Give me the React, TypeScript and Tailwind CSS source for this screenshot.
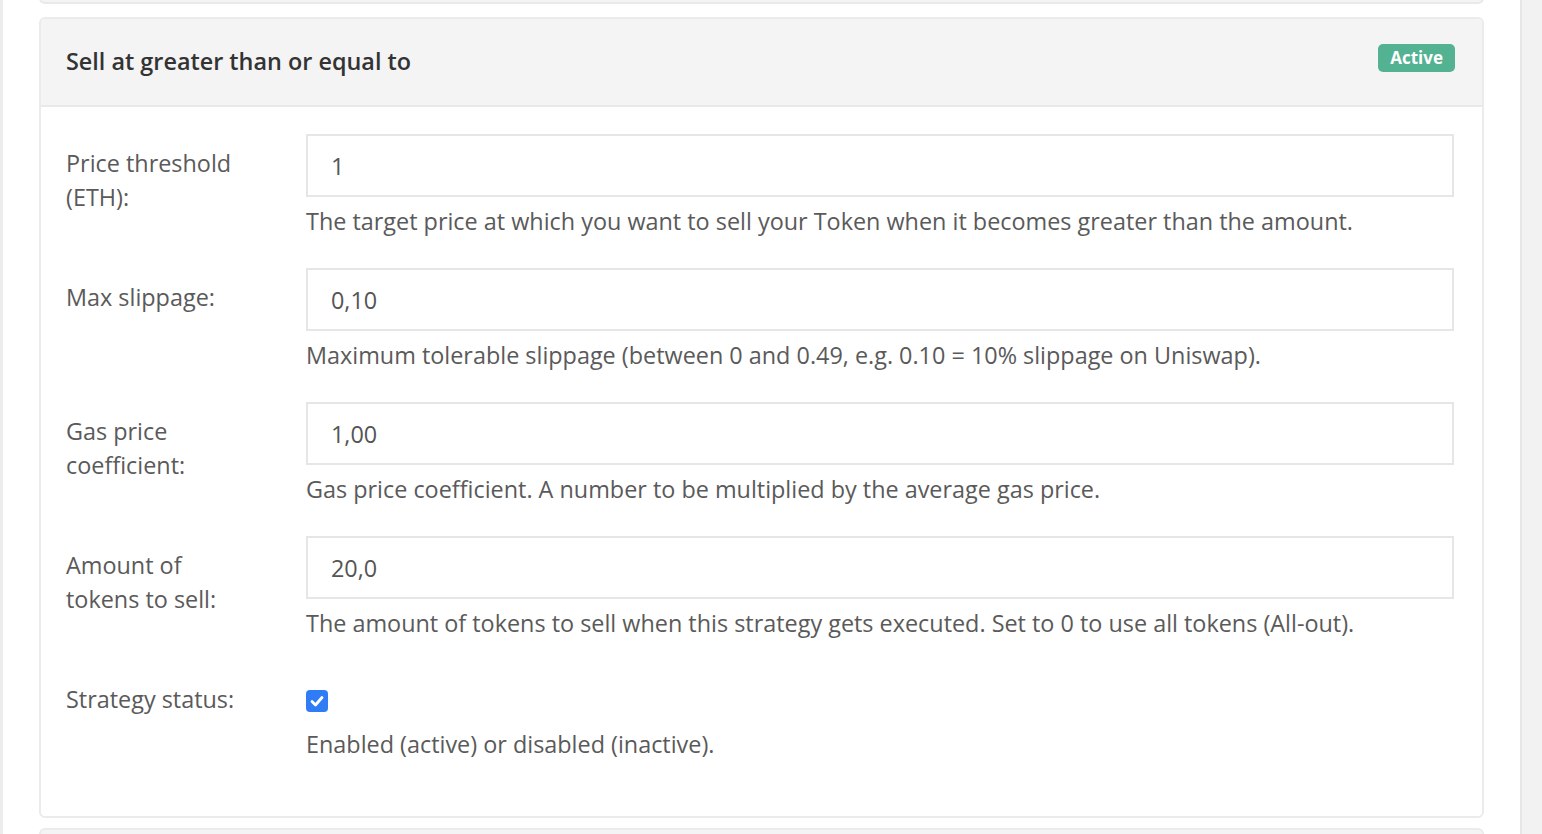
import { useState } from 'react';

const fields = [
    {
        label: ['Price threshold', '(ETH):'],
        value: '1',
        help: 'The target price at which you want to sell your Token when it becomes greater than the amount.',
    },
    {
        label: ['Max slippage:'],
        value: '0,10',
        help: 'Maximum tolerable slippage (between 0 and 0.49, e.g. 0.10 = 10% slippage on Uniswap).',
    },
    {
        label: ['Gas price', 'coefficient:'],
        value: '1,00',
        help: 'Gas price coefficient. A number to be multiplied by the average gas price.',
    },
    {
        label: ['Amount of', 'tokens to sell:'],
        value: '20,0',
        help: 'The amount of tokens to sell when this strategy gets executed. Set to 0 to use all tokens (All-out).',
    },
];

const App = () => {
    const [enabled, setEnabled] = useState(true);

    return (
        <div className="flex h-[834px] overflow-hidden bg-white text-[#5a5a5a]" style={{ fontFamily: '"Open Sans", "Noto Sans", sans-serif' }}>
            <div className="w-[3px] shrink-0 bg-[#ececec]" />
            <div className="flex-1 flex flex-col pl-[36px] pr-[36px]">
                {/* bottom of previous card */}
                <div className="h-[6px] shrink-0 mt-[-2px] rounded-b-[6px] border-2 border-t-0 border-[#e9e9e9] bg-[#f4f4f4]" />

                <div className="mt-[13px] shrink-0 rounded-[6px] border-2 border-[#ebebeb] overflow-hidden">
                    <div className="h-[88px] flex items-center justify-between pl-[25px] pr-[27px] bg-[#f4f4f4] border-b-2 border-[#e9e9e9]">
                        <h2 className="text-[23.4px] font-semibold text-[#333]">Sell at greater than or equal to</h2>
                        <span className="mt-[-8px] h-[28px] px-[12px] flex items-center rounded-[5px] bg-[#52b292] text-white text-[17px] font-bold">Active</span>
                    </div>

                    <div className="pl-[25px] pr-[28px] pt-[27px] pb-[25px]">
                        {fields.map((f) => (
                            <div key={f.value} className="flex mb-[30px]">
                                <label className="w-[240px] shrink-0 pt-[12px] text-[23.4px] leading-[34px]">
                                    {f.label.map((l) => (
                                        <div key={l}>{l}</div>
                                    ))}
                                </label>
                                <div className="flex-1">
                                    <input
                                        readOnly
                                        value={f.value}
                                        className="w-full h-[63px] px-[23px] border-2 border-[#e6e6e6] text-[23.4px] text-[#555] outline-none"
                                    />
                                    <p className="mt-[7px] text-[23.4px] leading-[34px]">{f.help}</p>
                                </div>
                            </div>
                        ))}

                        <div className="flex mb-[30px]">
                            <label className="w-[240px] shrink-0 pt-[12px] text-[23.4px] leading-[34px]">Strategy status:</label>
                            <div className="flex-1">
                                <div className="h-[50px] flex items-center pt-[12px]">
                                    <button
                                        onClick={() => setEnabled(!enabled)}
                                        className={`w-[22px] h-[22px] rounded-[4px] flex items-center justify-center ${enabled ? 'bg-[#2f7cf6]' : 'border-2 border-[#999] bg-white'}`}
                                    >
                                        {enabled && (
                                            <svg width="16" height="16" viewBox="0 0 16 16">
                                                <path d="M3 8.5 L6.5 12 L13 4.5" fill="none" stroke="white" strokeWidth="2.8" strokeLinecap="round" strokeLinejoin="round" />
                                            </svg>
                                        )}
                                    </button>
                                </div>
                                <p className="mt-[7px] text-[23.4px] leading-[34px]">Enabled (active) or disabled (inactive).</p>
                            </div>
                        </div>
                    </div>
                </div>

                <div className="mt-[10px] h-[20px] shrink-0 rounded-t-[6px] border-2 border-b-0 border-[#ebebeb] bg-[#f4f4f4]" />
            </div>
            <div className="w-[22px] shrink-0 bg-[#f2f2f2] border-l-2 border-[#e6e6e6]" />
        </div>
    );
};

export default App;
